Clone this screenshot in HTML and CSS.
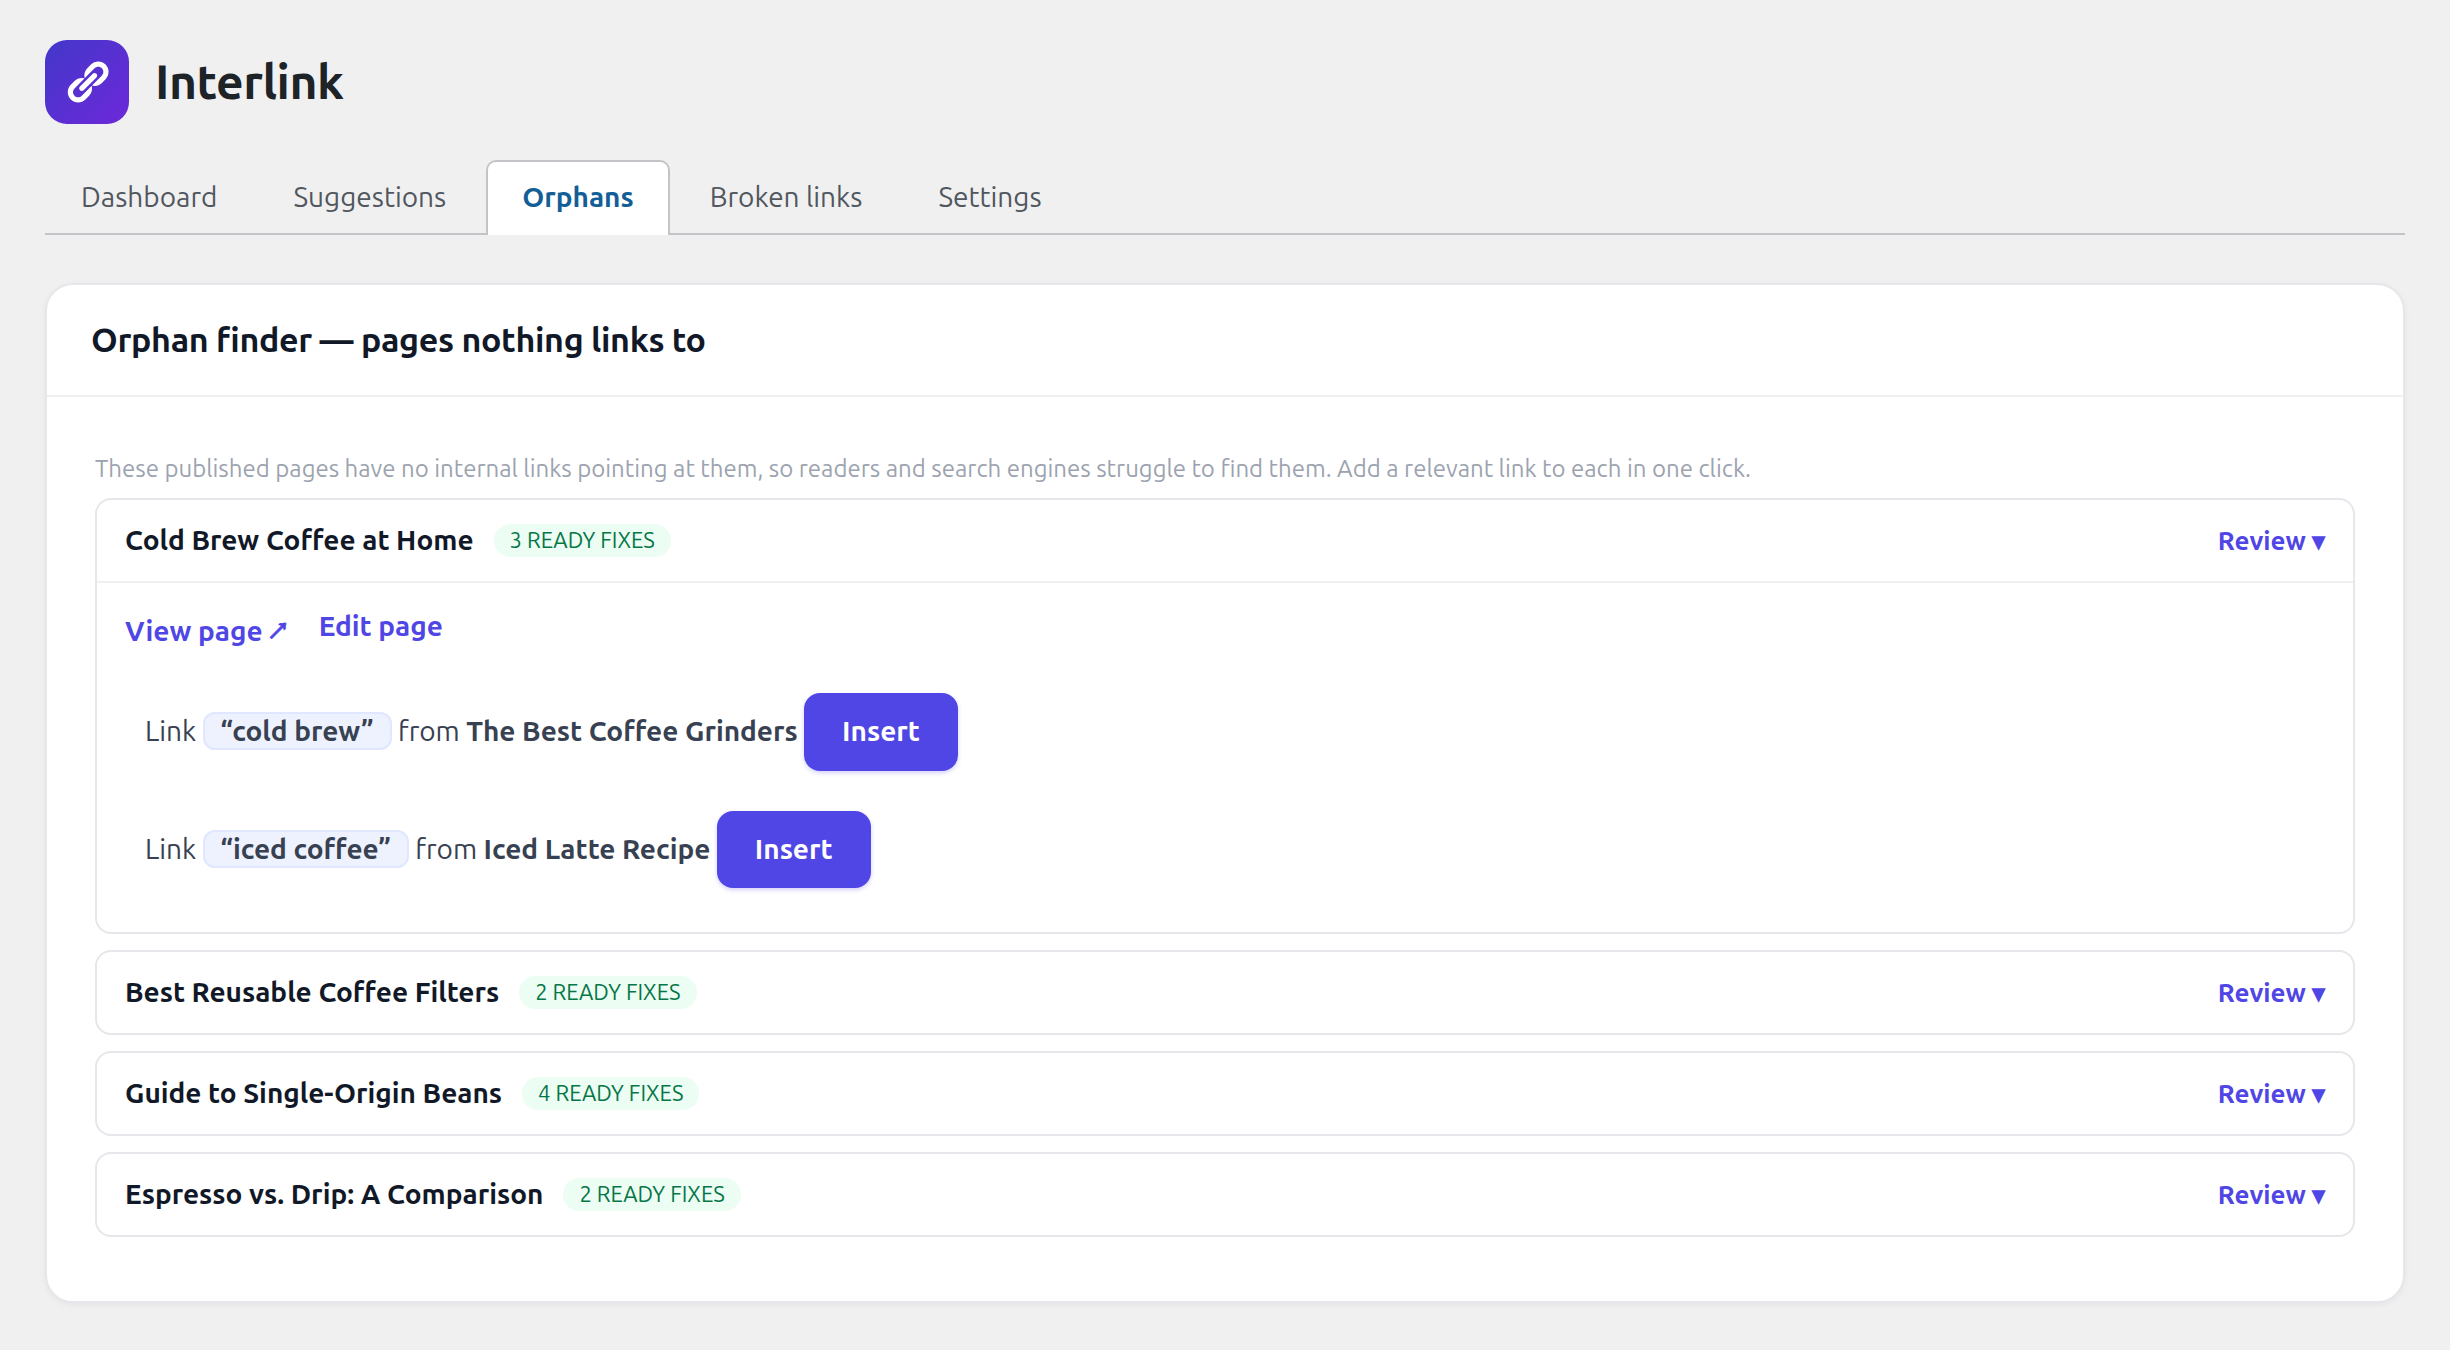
FILE: index.html
```
<!DOCTYPE html>
<html lang="en">
<head>
<meta charset="utf-8">
<title>Interlink – Orphans</title>
<link rel="stylesheet" href="styles.css">
</head>
<body>
<header class="brand">
  <span class="brand-logo">
    <svg class="brand-icon" viewBox="0 0 20 20" aria-hidden="true"><path d="M17.74 2.76c1.68 1.69 1.68 4.41 0 6.1l-1.53 1.52c-1.12 1.12-2.7 1.47-4.14 1.09l2.62-2.61.76-.77.76-.76c.84-.84.84-2.2 0-3.04-.84-.85-2.2-.85-3.04 0l-.77.76-3.38 3.38c-.37-1.44-.02-3.02 1.1-4.14l1.52-1.53c1.69-1.68 4.42-1.68 6.1 0zM8.59 13.43l5.34-5.34c.42-.42.42-1.1 0-1.52-.44-.43-1.13-.39-1.53 0l-5.33 5.34c-.42.42-.42 1.1 0 1.52.44.43 1.13.39 1.52 0zm-.76 2.29l4.14-4.15c.38 1.44.03 3.02-1.09 4.14l-1.52 1.53c-1.69 1.68-4.41 1.68-6.1 0-1.68-1.68-1.68-4.42 0-6.1l1.53-1.52c1.12-1.12 2.7-1.47 4.14-1.1l-4.14 4.15c-.85.84-.85 2.2 0 3.05.84.84 2.2.84 3.04 0z"/></svg>
  </span>
  <h1 class="brand-name">Interlink</h1>
</header>

<nav class="tabs">
  <a class="tab">Dashboard</a>
  <a class="tab">Suggestions</a>
  <a class="tab tab-active">Orphans</a>
  <a class="tab">Broken links</a>
  <a class="tab">Settings</a>
</nav>

<main class="card">
  <div class="card-head"><h2 class="card-title">Orphan finder — pages nothing links to</h2></div>
  <div class="card-body">
    <p class="hint">These published pages have no internal links pointing at them, so readers and search engines struggle to find them. Add a relevant link to each in one click.</p>
    <div class="orphans">
      <section class="orphan">
        <div class="orphan-head">
          <strong class="orphan-title">Cold Brew Coffee at Home</strong>
          <span class="badge">3 READY FIXES</span>
          <a class="review">Review ▾</a>
        </div>
        <div class="orphan-detail">
          <div class="page-links"><a class="page-link page-link-out">View page <span class="arrow">↗</span></a><a class="page-link">Edit page</a></div>
          <div class="fix">Link <strong class="anchor">“cold brew”</strong> from <strong>The Best Coffee Grinders</strong> <button class="insert">Insert</button></div>
          <div class="fix">Link <strong class="anchor">“iced coffee”</strong> from <strong>Iced Latte Recipe</strong> <button class="insert">Insert</button></div>
        </div>
      </section>
      <section class="orphan">
        <div class="orphan-head">
          <strong class="orphan-title">Best Reusable Coffee Filters</strong>
          <span class="badge">2 READY FIXES</span>
          <a class="review">Review ▾</a>
        </div>
      </section>
      <section class="orphan">
        <div class="orphan-head">
          <strong class="orphan-title">Guide to Single-Origin Beans</strong>
          <span class="badge">4 READY FIXES</span>
          <a class="review">Review ▾</a>
        </div>
      </section>
      <section class="orphan">
        <div class="orphan-head">
          <strong class="orphan-title">Espresso vs. Drip: A Comparison</strong>
          <span class="badge">2 READY FIXES</span>
          <a class="review">Review ▾</a>
        </div>
      </section>
    </div>
  </div>
</main>
</body>
</html>
```
FILE: styles.css
```
* {
  box-sizing: border-box;
}

body {
  margin: 0;
  padding: 40px 45px;
  background: #f0f0f1;
  color: #374151;
  font-family: Ubuntu, "Open Sans", sans-serif;
  font-size: 28px;
}

strong {
  font-weight: 600;
}

/* Brand */
.brand {
  display: flex;
  align-items: center;
  gap: 26px;
  height: 84px;
  margin-bottom: 36px;
}

.brand-logo {
  display: flex;
  align-items: center;
  justify-content: center;
  width: 84px;
  height: 84px;
  border-radius: 22px;
  background: linear-gradient(135deg, #4338ca, #6d28d9);
}

.brand-icon {
  width: 48px;
  height: 48px;
  fill: #fff;
}

.brand-name {
  margin: 0;
  padding-bottom: 2px;
  color: #1d2327;
  font-size: 48px;
  font-weight: 600;
  letter-spacing: -0.01em;
}

/* Tabs */
.tabs {
  display: flex;
  gap: 4px;
  height: 75px;
  border-bottom: 2px solid #c3c4c7;
}

.tab {
  display: flex;
  align-items: center;
  height: 75px;
  padding: 0 34px 4px;
  border: 2px solid transparent;
  border-bottom: 0;
  border-radius: 10px 10px 0 0;
  color: #50575e;
}

.tab-active {
  border-color: #c3c4c7;
  background: #fff;
  color: #135e96;
  font-weight: 600;
}

/* Card */
.card {
  margin-top: 48px;
  border: 2px solid #e5e7eb;
  border-radius: 28px;
  background: #fff;
  box-shadow: 0 2px 6px rgba(16, 24, 40, 0.05);
}

.card-head {
  display: flex;
  align-items: center;
  height: 112px;
  padding: 0 44px;
  border-bottom: 2px solid #f0f0f1;
}

.card-title {
  margin: 0;
  padding-bottom: 2px;
  color: #111827;
  font-size: 34px;
  font-weight: 600;
  letter-spacing: -0.01em;
}

.card-body {
  padding: 48px 48px 64px;
}

.hint {
  margin: 0;
  height: 53px;
  color: #9ca3af;
  font-size: 24px;
  line-height: 48px;
}

/* Orphan list */
.orphans {
  display: flex;
  flex-direction: column;
  gap: 16px;
}

.orphan {
  border: 2px solid #e5e7eb;
  border-radius: 16px;
}

.orphan-head {
  display: flex;
  align-items: center;
  gap: 20px;
  height: 81px;
  padding: 0 28px;
}

.orphan-title {
  padding-bottom: 2px;
  color: #111827;
}

.badge {
  height: 33px;
  padding: 0 16px;
  border-radius: 17px;
  background: #ecfdf3;
  color: #067647;
  font-size: 22px;
  line-height: 31px;
}

.review {
  margin-left: auto;
  color: #4f46e5;
  font-size: 26px;
  font-weight: 600;
}

.orphan-detail {
  height: 351px;
  padding: 27px 28px;
  border-top: 2px solid #f0f0f1;
}

.page-links {
  display: flex;
  align-items: flex-start;
  gap: 32px;
  height: 63px;
}

.page-link {
  color: #4f46e5;
  font-weight: 600;
}

.page-link-out {
  margin-top: 5px;
}

.arrow {
  display: inline-flex;
  justify-content: center;
  width: 17.5px;
  font-family: "Noto Sans Symbols", sans-serif;
  font-size: 30px;
  line-height: 20px;
  -webkit-text-stroke: 0.7px currentColor;
}

.fix {
  height: 117.6px;
  padding: 20px;
}

.anchor {
  padding: 1px 16px 2px;
  border: 2px solid #e0e7ff;
  border-radius: 12px;
  background: #eef2ff;
}

.insert {
  height: 77.6px;
  padding: 0 38px 2px;
  border: 0;
  border-radius: 16px;
  background: #4f46e5;
  box-shadow: 0 2px 4px rgba(79, 70, 229, 0.25);
  color: #fff;
  font: inherit;
  font-weight: 600;
}
```
